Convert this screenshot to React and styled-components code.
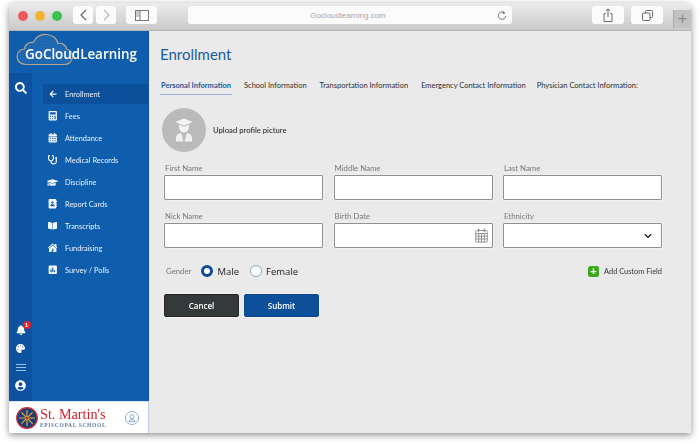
import styled, { createGlobalStyle } from "styled-components";
import {
  FaArrowLeft,
  FaBell,
  FaBookOpen,
  FaCalculator,
  FaCalendarAlt,
  FaChevronDown,
  FaGraduationCap,
  FaPalette,
  FaPoll,
  FaSearch,
  FaStethoscope,
  FaUserCircle,
  FaAddressBook,
  FaHouseDamage,
} from "react-icons/fa";

const GlobalStyle = createGlobalStyle`
  html, body {
    margin: 0;
    background: #fff;
  }
  body {
    font-family: "Lato", "Open Sans", "Liberation Sans", sans-serif;
    overflow: hidden;
  }
`;

const Page = styled.div`
  width: 700px;
  height: 445px;
  padding: 3px 9px 12px;
  box-sizing: border-box;
`;

const Window = styled.div`
  height: 430px;
  display: flex;
  flex-direction: column;
  border-radius: 6px 6px 0 0;
  box-shadow: 0 2px 7px rgba(0, 0, 0, 0.45);
  overflow: hidden;
  filter: blur(0.35px);
`;

const Toolbar = styled.div`
  height: 28px;
  flex: none;
  display: flex;
  align-items: flex-start;
  padding-top: 3px;
  box-sizing: border-box;
  background: linear-gradient(#ececec, #c9c9c9);
  border-bottom: 1px solid #b5b5b5;
`;

const Lights = styled.div`
  display: flex;
  gap: 7px;
  margin: 5px 11px 0 9px;
`;

const Light = styled.span`
  width: 10px;
  height: 10px;
  border-radius: 50%;
  background: ${(props) => props.color};
`;

const ToolButton = styled.div`
  width: ${(props) => props.width}px;
  height: 18px;
  margin-left: ${(props) => props.gap}px;
  background: #fbfbfb;
  border-radius: 3px;
  display: flex;
  align-items: center;
  justify-content: center;
  flex: none;
`;

const UrlBar = styled.div`
  width: 324px;
  height: 18px;
  margin-left: 31px;
  margin-right: 80px;
  background: #fbfbfb;
  border-radius: 3px;
  flex: none;
  display: flex;
  align-items: center;
  position: relative;
  justify-content: center;
  color: #a5a5a5;
  font-family: "Liberation Sans", sans-serif;
  font-size: 8px;
  padding-right: 4px;
  box-sizing: border-box;
`;

const ReloadIcon = styled.svg`
  position: absolute;
  right: 5px;
  top: 4px;
`;

const NewTab = styled.div`
  width: 18px;
  height: 18px;
  margin: 4px 0 0 10px;
  background: #c2c2c2;
  border-left: 1px solid #aaa;
  color: #8a8a8a;
  font-family: "Liberation Sans", sans-serif;
  font-size: 16px;
  font-weight: 300;
  line-height: 18px;
  text-align: center;
`;

const Body = styled.div`
  flex: 1;
  display: flex;
  min-height: 0;
`;

const Sidebar = styled.aside`
  width: 140px;
  flex: none;
  display: flex;
  flex-direction: column;
  background: #0f5dad;
  border-right: 1px solid #0b4f9c;
  box-sizing: border-box;
`;

const LogoArea = styled.div`
  height: 42px;
  flex: none;
  position: relative;
  padding: 13px 0 0 16px;
  box-sizing: border-box;
`;

const CloudMark = styled.svg`
  position: absolute;
  left: 7px;
  top: 2px;
`;

const LogoText = styled.div`
  position: relative;
  color: #fff;
  font-family: "Open Sans", sans-serif;
  font-size: 13.4px;
  line-height: 20px;
  font-weight: 600;
  white-space: nowrap;
`;

const SideMain = styled.div`
  flex: 1;
  display: flex;
  min-height: 0;
`;

const Rail = styled.div`
  width: 23px;
  flex: none;
  background: #0c52a1;
  display: flex;
  flex-direction: column;
  align-items: center;
  justify-content: space-between;
  padding: 9px 0 10px;
  box-sizing: border-box;
  color: #fff;

  svg {
    display: block;
  }
`;

const RailGroup = styled.div`
  display: flex;
  flex-direction: column;
  align-items: center;
  gap: 9px;
`;

const BellWrap = styled.div`
  position: relative;
  height: 10px;
`;

const Badge = styled.span`
  position: absolute;
  right: -5px;
  top: -4px;
  width: 8px;
  height: 8px;
  border-radius: 50%;
  background: #e5252b;
  color: #fff;
  font-size: 6px;
  line-height: 8px;
  text-align: center;
  font-weight: 700;
`;

const Hamburger = styled.div`
  width: 10px;
  height: 5px;
  border-top: 1px solid #9fc0e6;
  border-bottom: 1px solid #9fc0e6;
  position: relative;
  margin-top: 2px;

  &::after {
    content: "";
    position: absolute;
    left: 0;
    right: 0;
    top: 2px;
    height: 1px;
    background: #9fc0e6;
  }
`;

const Nav = styled.nav`
  flex: 1;
  padding: 11px 0 0 11px;
  display: flex;
  flex-direction: column;
  gap: 2px;
`;

const NavItem = styled.div`
  height: 20px;
  display: flex;
  align-items: center;
  padding-left: 1px;
  color: #eaf2fb;
  font-size: 7.4px;
  background: ${(props) => (props.$active ? "#0c4f9a" : "transparent")};
`;

const NavIcon = styled.span`
  width: 17px;
  height: 20px;
  margin-right: 4px;
  display: flex;
  align-items: center;
  justify-content: center;
  flex: none;
  color: #f4f8fd;
  font-size: 9.5px;
`;

const SchoolBar = styled.div`
  height: 32px;
  flex: none;
  background: #fff;
  border-top: 1px solid #dce6f1;
  border-right: 1px solid #bcd0e8;
  display: flex;
  align-items: center;
  padding: 1px 9px 0 7px;
  margin-right: -1px;
  box-sizing: border-box;
`;

const SchoolNames = styled.div`
  margin-left: 2px;
  flex: 1;
  display: flex;
  flex-direction: column;
`;

const SchoolName = styled.div`
  font-family: "Liberation Serif", serif;
  color: #d5232c;
  font-size: 14.2px;
  line-height: 13px;
  white-space: nowrap;
`;

const SchoolSub = styled.div`
  font-family: "Liberation Serif", serif;
  color: #5f7fa8;
  font-size: 5.6px;
  font-weight: 700;
  line-height: 8px;
  letter-spacing: 0.6px;
  white-space: nowrap;
`;

const Main = styled.main`
  flex: 1;
  background: #eaeaea;
  padding: 13px 0 0 11px;
  box-sizing: border-box;
`;

const Title = styled.h1`
  margin: 0;
  font-size: 15px;
  line-height: 20px;
  font-weight: 400;
  color: #1b5a9f;
`;

const Tabs = styled.div`
  display: flex;
  margin-top: 13px;
  height: 20px;
`;

const Tab = styled.div`
  margin-right: ${(props) => props.$gap}px;
  padding: 0 1px;
  height: 17px;
  line-height: 17px;
  font-size: 7.5px;
  white-space: nowrap;
  color: ${(props) => (props.$active ? "#1b5a9f" : "#2e2e2e")};
  font-weight: ${(props) => (props.$active ? 700 : 400)};
  border-bottom: ${(props) => (props.$active ? "1px solid #9bb4d6" : "none")};
`;

const UploadRow = styled.div`
  display: flex;
  align-items: center;
  gap: 7px;
  margin: 11px 0 0 2px;
`;

const Avatar = styled.div`
  width: 44px;
  height: 44px;
  border-radius: 50%;
  background: #bababa;
  display: flex;
  align-items: center;
  justify-content: center;
`;

const UploadText = styled.span`
  font-size: 7.7px;
  font-weight: 500;
  color: #2c2c2c;
`;

const Grid = styled.div`
  display: grid;
  grid-template-columns: repeat(3, 159px);
  column-gap: 10.5px;
  row-gap: 11px;
  margin: 11px 0 0 4px;
`;

const Field = styled.div`
  display: flex;
  flex-direction: column;
`;

const Label = styled.label`
  font-size: 7.8px;
  line-height: 10px;
  color: #777;
  margin-bottom: 2px;
  margin-left: 1px;
`;

const InputBox = styled.div`
  height: 25px;
  background: #fff;
  border: 1px solid #8f8f8f;
  border-radius: 1px;
  box-sizing: border-box;
  display: flex;
  align-items: center;
  justify-content: flex-end;
  padding-right: ${(props) => props.$pad || 9}px;
  box-shadow: 0 0 0 0.5px #f7f7f7;
`;

const GenderRow = styled.div`
  display: flex;
  align-items: center;
  justify-content: space-between;
  margin: 15px 29px 0 6px;
  height: 16px;
`;

const GenderGroup = styled.div`
  display: flex;
  align-items: center;
`;

const GenderLabel = styled.span`
  font-size: 7.8px;
  color: #777;
  margin-right: 10px;
`;

const Radio = styled.span`
  width: ${(props) => (props.$on ? "6px" : "10px")};
  height: ${(props) => (props.$on ? "6px" : "10px")};
  border-radius: 50%;
  background: #fff;
  border: ${(props) => (props.$on ? "3px solid #0d4c9a" : "1px solid #8ba7cc")};
  margin-right: 4px;
  flex: none;
`;

const RadioText = styled.span`
  font-family: "Open Sans", sans-serif;
  font-size: 9.5px;
  font-weight: 500;
  color: #1c1c1c;
  margin-right: 11px;
`;

const AddField = styled.div`
  display: flex;
  align-items: center;
  gap: 5px;
  font-size: 7.4px;
  font-weight: 500;
  color: #444;
`;

const PlusIcon = styled.span`
  width: 11px;
  height: 11px;
  border-radius: 2.5px;
  background: #3ba81a;
  color: #fff;
  font-size: 11px;
  font-weight: 700;
  line-height: 11px;
  text-align: center;
  font-family: "Liberation Sans", sans-serif;
`;

const Actions = styled.div`
  display: flex;
  gap: 5px;
  margin: 15px 0 0 4px;
`;

const Button = styled.button`
  width: 75px;
  height: 23px;
  border: 1px solid ${(props) => (props.$primary ? "#0b4690" : "#222")};
  border-radius: 2px;
  background: ${(props) => (props.$primary ? "#0d5099" : "#343a3a")};
  color: #fff;
  font-family: "Open Sans", sans-serif;
  font-size: 8px;
  font-weight: 600;
  padding: 0;
  box-shadow: 0 0 0 0.5px #f7f7f7;
`;

const navItems = [
  { label: "Enrollment", icon: <FaArrowLeft size={8} />, active: true },
  { label: "Fees", icon: <FaCalculator /> },
  { label: "Attendance", icon: <FaCalendarAlt /> },
  { label: "Medical Records", icon: <FaStethoscope /> },
  { label: "Discipline", icon: <FaGraduationCap size={11} /> },
  { label: "Report Cards", icon: <FaAddressBook /> },
  { label: "Transcripts", icon: <FaBookOpen /> },
  { label: "Fundraising", icon: <FaHouseDamage /> },
  { label: "Survey / Polls", icon: <FaPoll /> },
];

const tabs = [
  { label: "Personal Information", gap: 11, active: true },
  { label: "School Information", gap: 11 },
  { label: "Transportation Information", gap: 11 },
  { label: "Emergency Contact Information", gap: 9 },
  { label: "Physician Contact Information:", gap: 0 },
];

const CalendarGlyph = () => (
  <svg width="13" height="15" viewBox="0 0 13 15" fill="none" stroke="#8a8a8a" strokeWidth="0.9">
    <rect x="0.7" y="2.5" width="11.6" height="11.6" rx="1" />
    <path d="M1 5.5h11M1 8.2h11M1 11h11M3.7 5.5v8.5M6.5 5.5v8.5M9.3 5.5v8.5" />
    <path d="M3.6 0.8v3M9.4 0.8v3" strokeWidth="1.5" />
  </svg>
);

const Graduate = () => (
  <svg width="20" height="24" viewBox="0 0 20 24" fill="#f2f2f2">
    <path d="M10 0.5 19 4 10 7.5 1 4z" />
    <path d="M5 6.5 10 8.5 15 6.5V9c0 3-2.2 5.5-5 5.5S5 12 5 9z" />
    <path d="M2 23.5v-4c0-2.5 2.500-4 5.200-4.400L9.400 23.500zM18 23.500v-4c0-2.500-2.500-4-5.200-4.400L10.600 23.500z" />
  </svg>
);

const SchoolSeal = () => (
  <svg width="22" height="22" viewBox="0 0 22 22">
    <circle cx="11" cy="11" r="10.3" fill="#1b3d78" stroke="#cf2a2f" strokeWidth="1.2" />
    <g stroke="#e9b52e" strokeWidth="1.1" strokeLinecap="round">
      <path d="M11 3.5v15M3.5 11h15M5.7 5.7l10.6 10.6M16.3 5.7 5.7 16.3" />
    </g>
    <circle cx="11" cy="11" r="1.6" fill="#cf2a2f" />
  </svg>
);

const CloudLogo = () => (
  <CloudMark width="58" height="34" viewBox="0 0 58 34" fill="none">
    <defs>
      <pattern id="speckle" width="3" height="3" patternUnits="userSpaceOnUse">
        <rect width="3" height="3" fill="#1a63ae" />
        <circle cx="1" cy="1" r="0.45" fill="#6f9fd2" />
        <circle cx="2.4" cy="2.3" r="0.3" fill="#4f88c4" />
      </pattern>
    </defs>
    <path
      d="M10 31.500C4.500 31.500 1 28 1 23.500 1 19 4.500 16 8.500 16 9 11.500 13 8.500 17 9.500 20 4 25.500 1 31 1.500 36.500 2 41 5.500 42 10.500 46 9.500 50 12 50.500 16 54 17 56.800 20 56.500 24 56.200 28.500 52.500 31.500 48 31.500z"
      fill="url(#speckle)"
      stroke="#b7a68a"
      strokeWidth="1.2"
    />
  </CloudMark>
);

const App = () => {
  return (
    <Page>
      <GlobalStyle />
      <Window>
        <Toolbar>
          <Lights>
            <Light color="#ee5a5a" />
            <Light color="#f5b431" />
            <Light color="#3cc24e" />
          </Lights>
          <ToolButton width={20} gap={0}>
            <svg width="9" height="12" viewBox="0 0 9 12" fill="none" stroke="#666" strokeWidth="1.2">
              <path d="M7 1 2 6l5 5" />
            </svg>
          </ToolButton>
          <ToolButton width={20} gap={3}>
            <svg width="9" height="12" viewBox="0 0 9 12" fill="none" stroke="#b5b5b5" strokeWidth="1.2">
              <path d="M2 1l5 5-5 5" />
            </svg>
          </ToolButton>
          <ToolButton width={31} gap={10}>
            <svg width="14" height="11" viewBox="0 0 14 11" fill="none" stroke="#777" strokeWidth="1">
              <rect x="0.5" y="0.5" width="13" height="10" />
              <path d="M5 0.5v10" />
              <path d="M1 2h3.500M1 4h3.500M1 6h3.500" strokeWidth="0.7" />
            </svg>
          </ToolButton>
          <UrlBar>
            Gocloudlearning.com
            <ReloadIcon width="10" height="11" viewBox="0 0 10 11" fill="none" stroke="#777" strokeWidth="1">
              <path d="M7.800 3.200A3.700 3.700 0 1 0 8.700 6" />
              <path d="M5.800 0.800 8.200 3 5.600 4.200" fill="#777" stroke="none" />
            </ReloadIcon>
          </UrlBar>
          <ToolButton width={32} gap={0}>
            <svg width="10" height="14" viewBox="0 0 10 14" fill="none" stroke="#666" strokeWidth="1">
              <path d="M2.800 5.500H1v8h8v-8H7.200M5 9V1M3 2.800 5 1l2 1.800" />
            </svg>
          </ToolButton>
          <ToolButton width={32} gap={7}>
            <svg width="11" height="11" viewBox="0 0 11 11" fill="none" stroke="#666" strokeWidth="1">
              <path d="M3.500 3V1.500a1 1 0 0 1 1-1h5a1 1 0 0 1 1 1v5a1 1 0 0 1-1 1H8" />
              <rect x="0.500" y="3" width="7.500" height="7.500" rx="1" />
            </svg>
          </ToolButton>
          <NewTab>+</NewTab>
        </Toolbar>
        <Body>
          <Sidebar>
            <LogoArea>
              <CloudLogo />
              <LogoText>GoCloudLearning</LogoText>
            </LogoArea>
            <SideMain>
              <Rail>
                <FaSearch size={12} />
                <RailGroup>
                  <BellWrap>
                    <FaBell size={10} />
                    <Badge>1</Badge>
                  </BellWrap>
                  <FaPalette size={9} />
                  <Hamburger />
                  <FaUserCircle size={11} />
                </RailGroup>
              </Rail>
              <Nav>
                {navItems.map((item) => (
                  <NavItem key={item.label} $active={item.active}>
                    <NavIcon>{item.icon}</NavIcon>
                    {item.label}
                  </NavItem>
                ))}
              </Nav>
            </SideMain>
            <SchoolBar>
              <SchoolSeal />
              <SchoolNames>
                <SchoolName>St. Martin's</SchoolName>
                <SchoolSub>EPISCOPAL SCHOOL</SchoolSub>
              </SchoolNames>
              <svg width="14" height="14" viewBox="0 0 14 14" fill="none" stroke="#6f9ccd" strokeWidth="0.8">
                <circle cx="7" cy="7" r="6.500" />
                <circle cx="7" cy="5.700" r="2" />
                <path d="M3.800 10.500c.5-1.500 1.700-2 3.200-2s2.700.5 3.200 2z" />
              </svg>
            </SchoolBar>
          </Sidebar>
          <Main>
            <Title>Enrollment</Title>
            <Tabs>
              {tabs.map((tab) => (
                <Tab key={tab.label} $active={tab.active} $gap={tab.gap}>
                  {tab.label}
                </Tab>
              ))}
            </Tabs>
            <UploadRow>
              <Avatar>
                <Graduate />
              </Avatar>
              <UploadText>Upload profile picture</UploadText>
            </UploadRow>
            <Grid>
              <Field>
                <Label>First Name</Label>
                <InputBox />
              </Field>
              <Field>
                <Label>Middle Name</Label>
                <InputBox />
              </Field>
              <Field>
                <Label>Last Name</Label>
                <InputBox />
              </Field>
              <Field>
                <Label>Nick Name</Label>
                <InputBox />
              </Field>
              <Field>
                <Label>Birth Date</Label>
                <InputBox $pad={4}>
                  <CalendarGlyph />
                </InputBox>
              </Field>
              <Field>
                <Label>Ethnicity</Label>
                <InputBox>
                  <FaChevronDown size={8} color="#111" />
                </InputBox>
              </Field>
            </Grid>
            <GenderRow>
              <GenderGroup>
                <GenderLabel>Gender</GenderLabel>
                <Radio $on />
                <RadioText>Male</RadioText>
                <Radio />
                <RadioText>Female</RadioText>
              </GenderGroup>
              <AddField>
                <PlusIcon>+</PlusIcon>
                Add Custom Field
              </AddField>
            </GenderRow>
            <Actions>
              <Button>Cancel</Button>
              <Button $primary>Submit</Button>
            </Actions>
          </Main>
        </Body>
      </Window>
    </Page>
  );
};

export default App;
